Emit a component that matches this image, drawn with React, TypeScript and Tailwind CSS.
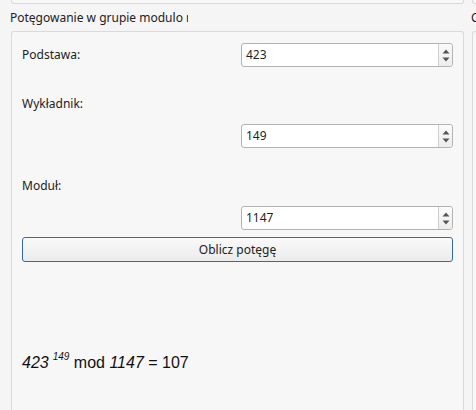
import type { ReactNode } from "react"

function SpinArrows() {
  return (
    <div className="flex w-[14px] flex-col items-center justify-center gap-[3px] rounded-r-[3px] border-l border-[#cfcfcf] bg-gradient-to-b from-[#fbfbfb] to-[#ececec]">
      <svg width="8" height="5" viewBox="0 0 8 5">
        <path d="M4 0.5 L7.5 4.5 L0.5 4.5 Z" fill="#555" />
      </svg>
      <svg width="8" height="5" viewBox="0 0 8 5">
        <path d="M0.5 0.5 L7.5 0.5 L4 4.5 Z" fill="#555" />
      </svg>
    </div>
  )
}

function SpinBox({ value }: { value: string }) {
  return (
    <div className="flex h-[24px] w-[212px] shrink-0 rounded-[3px] border border-[#b3b3b3] bg-white">
      <div className="flex flex-1 items-center pl-[4px] text-[12px] text-[#1f1f1f]">{value}</div>
      <SpinArrows />
    </div>
  )
}

function Label({ children }: { children: ReactNode }) {
  return <div className="flex h-[18px] items-center text-[12px] text-[#222]">{children}</div>
}

export default function App() {
  return (
    <div className="flex h-[410px] w-[476px] overflow-hidden bg-[#f5f5f5] font-['Noto_Sans',sans-serif] text-[#222]">
      <div className="flex w-[470px] shrink-0 flex-col">
        <div className="ml-[11px] h-[4px] w-[453px] rounded-b-[3px] border border-t-0 border-[#dadada] bg-[#f7f7f7]" />
        <div className="flex h-[27px] items-center pl-[10px]">
          <div className="w-[178px] overflow-hidden whitespace-nowrap text-[12px]">Potęgowanie w grupie modulo n</div>
        </div>
        <div className="ml-[11px] flex w-[453px] flex-1 flex-col rounded-t-[3px] border border-b-0 border-[#dadada] bg-[#f7f7f7] px-[10px]">
          <div className="mt-[11px] flex h-[24px] items-center justify-between">
            <Label>Podstawa:</Label>
            <SpinBox value="423" />
          </div>

          <div className="mt-[28px]">
            <Label>Wykładnik:</Label>
          </div>
          <div className="mt-[11px] flex justify-end">
            <SpinBox value="149" />
          </div>

          <div className="mt-[29px]">
            <Label>Moduł:</Label>
          </div>
          <div className="mt-[11px] flex justify-end">
            <SpinBox value="1147" />
          </div>

          <button
            type="button"
            className="mt-[7px] h-[25px] w-full rounded-[3px] border border-[#2f6ea5] bg-gradient-to-b from-[#fafafa] to-[#ebebeb] text-center text-[12px] text-[#222]"
          >
            Oblicz potęgę
          </button>

          <div className="mt-[92px] h-[18px] whitespace-nowrap font-['Liberation_Sans',Arial,sans-serif] text-[16px] leading-[18px] text-[#111]">
            <i>423</i>
            <sup className="ml-[4px] top-[-8px] text-[10px] italic">149</sup> mod <i>1147</i> = 107
          </div>
        </div>
      </div>

      <div className="flex flex-1 flex-col">
        <div className="ml-[2px] h-[4px] rounded-b-[3px] border border-t-0 border-r-0 border-[#dadada] bg-[#f7f7f7]" />
        <div className="flex h-[27px] items-center pl-[1px]">
          <div className="text-[12px]">C</div>
        </div>
        <div className="ml-[2px] flex-1 rounded-tl-[3px] border-l border-t border-[#dadada] bg-[#f7f7f7]" />
      </div>
    </div>
  )
}
